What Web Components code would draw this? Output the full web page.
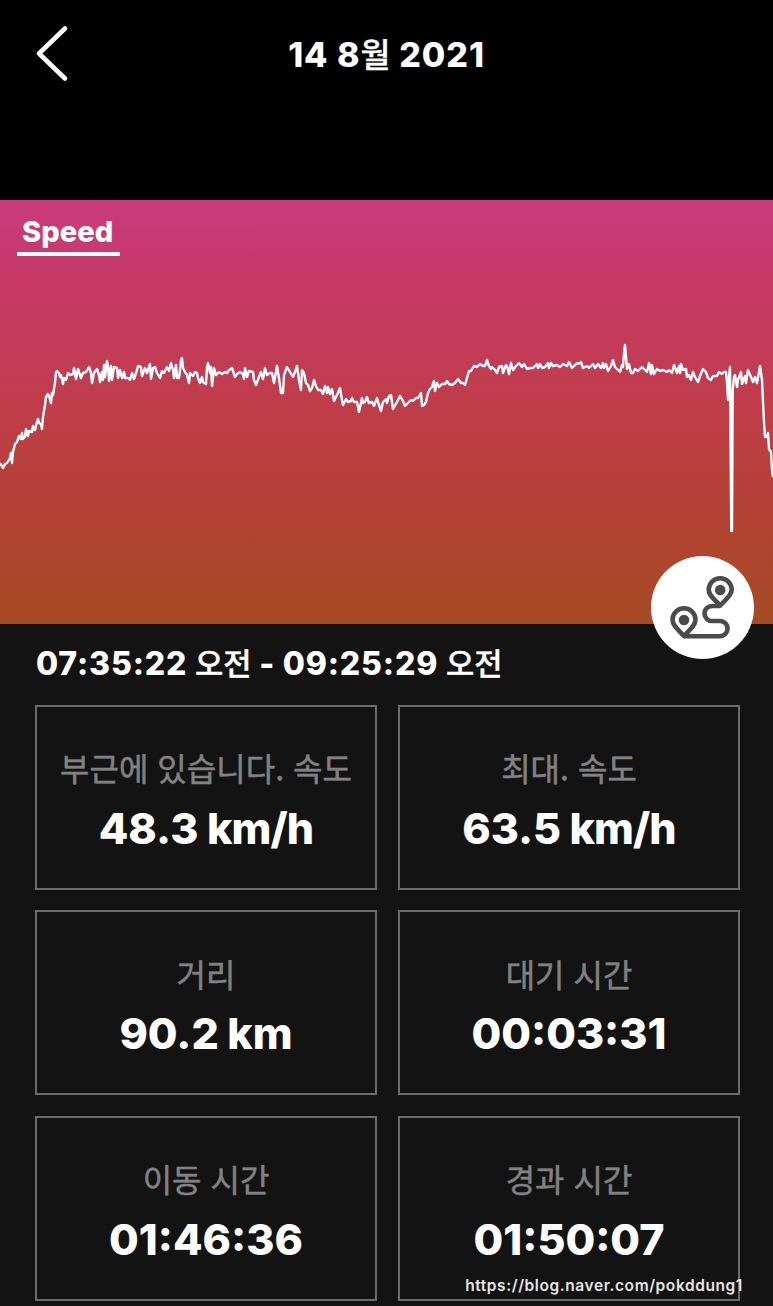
<!DOCTYPE html>
<html lang="ko">
<head>
<meta charset="utf-8">
<meta name="viewport" content="width=device-width">
<title>14 8월 2021</title>
<style>
  body {
    margin: 0;
    background: #131313;
    color: #fff;
    font-family: Inter, "Noto Sans CJK KR", sans-serif;
    overflow: hidden;
  }
</style>
</head>
<body>
<ride-page>
  <ride-header slot="header">14 8<ko-text>월</ko-text> 2021</ride-header>
  <speed-chart slot="chart" title-text="Speed"></speed-chart>
  <route-button slot="action"></route-button>
  <time-range slot="time">07:35:22 <ko-text>오전</ko-text> - 09:25:29 <ko-text>오전</ko-text></time-range>
  <stat-card label="부근에 있습니다. 속도">48.3 <unit-text tight>km/h</unit-text></stat-card>
  <stat-card label="최대. 속도">63.5 <unit-text tight>km/h</unit-text></stat-card>
  <stat-card label="거리">90.2 <unit-text>km</unit-text></stat-card>
  <stat-card label="대기 시간">00:03:31</stat-card>
  <stat-card label="이동 시간">01:46:36</stat-card>
  <stat-card label="경과 시간">01:50:07</stat-card>
  <water-mark slot="mark">https://blog.naver.com/pokddung1</water-mark>
</ride-page>

<script>
class RidePage extends HTMLElement {
  constructor() {
    super();
    this.attachShadow({ mode: "open" }).innerHTML = `<style>
    :host {
        display: flex;
        flex-direction: column;
        position: relative;
        height: 1306px;
        overflow: hidden;
        background: #131313;
    }
    .chart {
        position: relative;
    }
    /* round button hangs over the lower edge of the chart */
    .action {
        position: absolute;
        right: 19px;
        bottom: -35px;
    }
    .grid {
        display: grid;
        grid-template-columns: 342px 342px;
        grid-auto-rows: 185px;
        gap: 20.5px 21px;
        padding: 0 0 0 35px;
    }
    .mark {
        position: absolute;
        right: 30px;
        bottom: 10px;
    }
    </style>
    <slot name="header"></slot>
    <div class="chart">
      <slot name="chart"></slot>
      <div class="action"><slot name="action"></slot></div>
    </div>
    <slot name="time"></slot>
    <div class="grid"><slot></slot></div>
    <div class="mark"><slot name="mark"></slot></div>`;
  }
}

class RideHeader extends HTMLElement {
  constructor() {
    super();
    this.attachShadow({ mode: "open" }).innerHTML = `<style>
    :host {
        display: block;
        height: 200px;
        flex: none;
        background: #000;
    }
    .bar {
        display: grid;
        grid-template-columns: 80px 1fr 80px;
        align-items: center;
        height: 108px;
    }
    svg {
        display: block;
        margin-left: 32px;
    }
    .title {
        padding-top: 1px;
        text-align: center;
        white-space: nowrap;
        font-size: 34px;
        line-height: 40px;
        font-weight: 800;
        letter-spacing: 0.95px;
        word-spacing: 0.2px;
    }
    </style>
    <div class="bar">
      <svg width="40" height="60" viewBox="0 0 40 60" fill="none" stroke="#fff" stroke-width="4.6" stroke-linecap="round" stroke-linejoin="round">
        <path d="M33 4.500L7 29.500L33 54.500"/>
      </svg>
      <div class="title"><slot></slot></div>
    </div>`;
  }
}

// Korean glyphs are set lighter and a bit smaller than the digits around them
class KoText extends HTMLElement {
  constructor() {
    super();
    this.attachShadow({ mode: "open" }).innerHTML = `<style>
    :host {
        font-size: 0.96em;
        font-weight: 500;
        letter-spacing: 0;
        -webkit-text-stroke: 0.4px currentColor;
    }
    </style><slot></slot>`;
  }
}

class UnitText extends HTMLElement {
  constructor() {
    super();
    this.attachShadow({ mode: "open" }).innerHTML = `<style>
    :host {
        margin-left: -1px;
        font-weight: 800;
        letter-spacing: 0;
    }
    :host([tight]) {
        letter-spacing: -0.9px;
    }
    </style><slot></slot>`;
  }
}

const SPEED_POINTS = `0,263 3,268 5,264 7,263 10,258 11,253 12,263 13,252 15,244 17,242 19,236 21,239 22,233
  23,239 25,237 26,229 28,236 29,231 32,232 33,226 35,230 37,222 38,219 39,223 41,224 42,229 43,217 45,205
  46,197 48,194 49,196 51,203 52,193 53,195 55,183 56,172 57,171 59,173 60,177 61,175 63,184 64,178 66,180
  68,173 70,175 73,174 74,168 76,179 78,169 81,178 83,173 86,172 89,167 91,173 92,183 94,173 97,169 99,175
  100,182 102,172 103,180 104,165 105,177 107,161 108,167 109,181 111,166 112,180 114,167 117,168 118,178
  120,170 122,178 124,172 125,178 128,178 130,180 132,173 134,179 137,170 138,166 141,167 142,176 145,168
  147,173 150,164 151,179 153,168 155,167 157,173 160,178 162,171 164,173 167,167 169,171 171,163 173,170
  174,178 176,165 177,178 179,178 180,170 181,160 182,158 183,168 185,172 187,175 189,183 190,173 193,176
  195,172 197,173 198,178 200,183 202,177 203,182 206,184 207,167 208,163 210,173 211,167 212,186 214,168
  216,175 219,172 222,174 225,172 227,173 229,170 232,168 235,177 237,174 240,172 243,174 244,179 245,168
  247,177 249,171 253,172 254,180 256,185 259,177 261,172 263,179 265,168 267,175 270,173 272,173 274,183
  277,166 279,178 281,193 283,193 284,175 287,167 290,172 293,177 295,172 297,166 299,180 301,190 302,170
  304,173 306,183 308,185 310,191 312,188 314,180 316,186 318,190 321,190 323,194 325,186 327,193 328,187
  330,194 332,189 334,201 337,195 340,188 342,200 343,205 346,199 348,202 351,201 352,198 354,202 357,202
  359,212 362,198 363,203 365,202 367,197 369,203 372,202 374,206 377,198 379,205 381,211 383,202 386,199
  387,203 389,196 391,195 393,209 397,202 400,196 403,201 405,206 408,203 411,200 413,201 416,198 418,198
  421,193 422,206 424,205 426,202 428,193 430,189 432,187 434,181 435,191 437,183 439,187 442,184 445,184
  447,181 449,184 452,185 455,183 458,179 461,183 463,183 465,185 467,178 469,171 471,171 474,166 477,167
  480,164 483,166 485,166 487,160 489,166 491,169 492,167 495,170 497,173 499,167 502,166 503,173 506,165
  507,166 509,174 511,163 513,170 516,166 519,163 522,167 524,164 527,169 530,168 533,168 537,164 538,168
  540,164 542,168 545,167 548,163 549,168 551,163 553,166 557,165 560,167 563,164 567,166 569,162 572,168
  576,164 580,163 581,162 583,168 587,166 589,168 593,164 595,168 598,164 601,168 603,163 604,168 606,164
  608,171 611,166 613,160 615,167 617,169 620,172 622,165 623,167 624,153 625,145 626,157 627,169 629,164
  631,173 633,173 635,169 638,171 642,167 644,169 647,172 649,163 651,174 652,165 654,174 657,169 660,171
  663,170 667,172 669,170 672,173 674,165 677,173 679,166 680,173 681,164 683,170 686,169 687,177 689,175
  691,180 693,172 695,177 698,182 700,176 703,169 706,172 708,178 711,180 713,176 717,176 719,172 722,174
  724,172 726,172 727,183 728,200 729,177 730,167 731.300,331 732,331 732.700,190 734,177 735,175 737,187
  738,180 741,172 742,184 745,176 746,183 748,170 751,177 753,182 755,177 757,183 759,172 760,166 762,180
  763,202 764,222 765,237 767,237 768,233 769,249 771,252 772,270 773,277`;

class SpeedChart extends HTMLElement {
  constructor() {
    super();
    this.attachShadow({ mode: "open" }).innerHTML = `<style>
    :host {
        display: grid;
        height: 424px;
        background: linear-gradient(#ca3a7c 0%, #c63a62 25%, #bf3d49 50%, #b34233 75%, #a54b25 100%);
    }
    svg, .tab {
        grid-area: 1 / 1;
    }
    .tab {
        justify-self: start;
        align-self: start;
        box-sizing: border-box;
        width: 103px;
        height: 56px;
        margin-left: 17px;
        padding: 15px 0 0 5px;
        border-bottom: 4px solid #fff;
        font-size: 29px;
        line-height: 34px;
        font-weight: 800;
        letter-spacing: 0.1px;
    }
    </style>
    <svg width="773" height="424" viewBox="0 0 773 424" fill="none" stroke="#fff" stroke-width="2.4" stroke-linejoin="round">
      <polyline points="${SPEED_POINTS}"/>
    </svg>
    <div class="tab"></div>`;
    this.shadowRoot.querySelector(".tab").innerText = this.getAttribute("title-text");
  }
}

class RouteButton extends HTMLElement {
  constructor() {
    super();
    this.attachShadow({ mode: "open" }).innerHTML = `<style>
    :host {
        display: block;
        width: 103px;
        height: 103px;
        border-radius: 50%;
        background: #fff;
    }
    svg {
        display: block;
    }
    </style>
    <svg width="103" height="103" viewBox="0 0 103 103" fill="none" stroke="#4b4b4b" stroke-width="4.6" stroke-linejoin="round">
      <path d="M69.200 49.500C64 44 57.700 39.500 57.700 33.700a11.500 11.500 0 0 1 23 0C80.700 39.500 74 44 69.200 49.500z"/>
      <path d="M33 80C28 74.500 21.500 69.500 21.500 63.700a11.500 11.500 0 0 1 23 0C44.500 69.500 38 74.500 33 80z"/>
      <path d="M69 50H61a7.500 7.500 0 0 0 0 15h8a7.600 7.600 0 0 1 0 15.200H33"/>
      <circle cx="69.200" cy="34" r="5.300" fill="#4b4b4b" stroke="none"/>
      <circle cx="33" cy="64" r="5.300" fill="#4b4b4b" stroke="none"/>
    </svg>`;
  }
}

class TimeRange extends HTMLElement {
  constructor() {
    super();
    this.attachShadow({ mode: "open" }).innerHTML = `<style>
    :host {
        display: block;
        box-sizing: border-box;
        height: 80.7px;
        padding: 20px 0 0 36px;
        font-size: 32px;
        line-height: 40px;
        font-weight: 800;
        letter-spacing: 0.85px;
        word-spacing: -0.2px;
        white-space: nowrap;
    }
    </style><slot></slot>`;
  }
}

class StatCard extends HTMLElement {
  constructor() {
    super();
    this.attachShadow({ mode: "open" }).innerHTML = `<style>
    :host {
        display: flex;
        flex-direction: column;
        align-items: center;
        box-sizing: border-box;
        padding-top: 40.5px;
        border: 2px solid #6c6c6c;
        white-space: nowrap;
    }
    .label {
        color: #828282;
        font-family: "Noto Sans CJK KR", sans-serif;
        font-size: 32px;
        line-height: 40px;
        -webkit-text-stroke: 0.5px #828282;
    }
    .value {
        margin-top: 14.5px;
        font-size: 43px;
        line-height: 52px;
        font-weight: 800;
    }
    </style>
    <div class="label"></div>
    <div class="value"><slot></slot></div>`;
    this.shadowRoot.querySelector(".label").innerText = this.getAttribute("label");
  }
}

class WaterMark extends HTMLElement {
  constructor() {
    super();
    this.attachShadow({ mode: "open" }).innerHTML = `<style>
    :host {
        display: block;
        color: #e6e6e6;
        font-size: 15.5px;
        line-height: 20px;
        font-weight: 600;
        letter-spacing: 0.58px;
        white-space: nowrap;
    }
    </style><slot></slot>`;
  }
}

customElements.define("ride-page", RidePage);
customElements.define("ride-header", RideHeader);
customElements.define("ko-text", KoText);
customElements.define("unit-text", UnitText);
customElements.define("speed-chart", SpeedChart);
customElements.define("route-button", RouteButton);
customElements.define("time-range", TimeRange);
customElements.define("stat-card", StatCard);
customElements.define("water-mark", WaterMark);
</script>
</body>
</html>
